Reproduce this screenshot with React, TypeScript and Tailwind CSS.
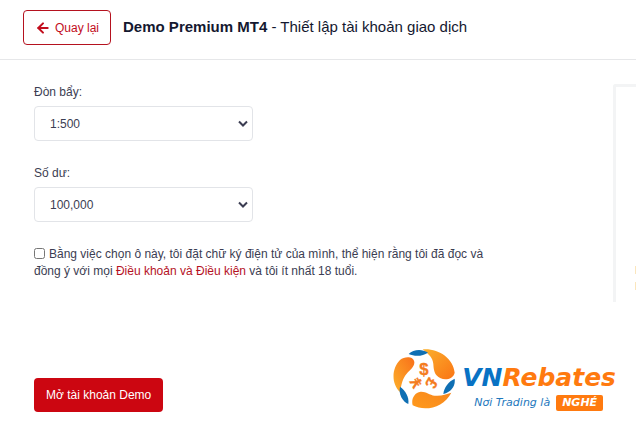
import { FiArrowLeft } from 'react-icons/fi'

const LEVERAGES = ['1:500', '1:200', '1:100']
const BALANCES = ['100,000', '50,000', '10,000']

type FieldProps = {
  id: string
  label: string
  options: string[]
}

function SelectField({ id, label, options }: FieldProps) {
  return (
    <div>
      <label htmlFor={id} className="block leading-4">
        {label}
      </label>
      <div className="relative mt-1.5 w-[219px]">
        <select
          id={id}
          className="h-[35px] w-full appearance-none rounded-[4px] border border-[#e2e4e8] bg-white px-[15px] text-[12px] text-[#3b3d52]"
        >
          {options.map((option) => (
            <option key={option}>{option}</option>
          ))}
        </select>
        <svg
          className="pointer-events-none absolute top-3.5 right-1 h-2 w-3"
          viewBox="0 0 12 8"
          fill="none"
          stroke="#3b3d52"
          strokeWidth="2"
        >
          <path d="M2 1.5 6 5.5 10 1.5" />
        </svg>
      </div>
    </div>
  )
}

function LogoMark() {
  return (
    <svg className="h-[62px] w-[62px] shrink-0" viewBox="25 25 186 184">
      <defs>
        <linearGradient id="flameTop" x1="0" y1="0" x2="1" y2="1">
          <stop offset="0" stopColor="#fbb02d" />
          <stop offset="1" stopColor="#fa7414" />
        </linearGradient>
        <linearGradient id="flameLeft" x1="0" y1="1" x2="1" y2="0">
          <stop offset="0" stopColor="#fdb02a" />
          <stop offset="1" stopColor="#f8701a" />
        </linearGradient>
        <linearGradient id="flameBottom" x1="1" y1="0" x2="0" y2="1">
          <stop offset="0" stopColor="#f7861e" />
          <stop offset="1" stopColor="#ff9a1c" />
        </linearGradient>
      </defs>
      <path
        fill="url(#flameTop)"
        d="M114 28C160 24 206 54 210 98C206 116 184 122 168 115C148 106 147 88 146 72C144 54 134 44 114 28Z"
      />
      <path
        fill="url(#flameLeft)"
        d="M46 156C20 132 20 86 46 60C60 49 86 48 89 66C90 82 74 90 66 101C54 114 50 134 46 156Z"
      />
      <path
        fill="url(#flameBottom)"
        d="M200 158C178 202 122 216 84 196C79 178 88 158 108 155C124 154 134 165 150 167C170 169 184 163 200 158Z"
      />
      <path fill="#0f6fb3" d="M72 42C86 28 112 26 130 38C114 49 90 50 72 42Z" />
      <path fill="#0f6fb3" d="M210 116C213 138 200 156 176 162C178 142 192 124 210 116Z" />
      <path fill="#0f6fb3" d="M46 140C62 152 74 170 71 192C54 184 41 164 46 140Z" />
      <g
        fill="#f47b20"
        stroke="#f47b20"
        strokeWidth="1"
        fontFamily="Liberation Sans"
        fontWeight="700"
        textAnchor="middle"
      >
        <text x="118" y="104" fontSize="50">
          $
        </text>
        <text x="95" y="144" fontSize="48" transform="rotate(-120 95 128)">
          ¥
        </text>
        <text x="140" y="146" fontSize="48" transform="rotate(120 140 130)">
          £
        </text>
      </g>
    </svg>
  )
}

function Logo() {
  return (
    <div className="flex items-start gap-[7px]">
      <LogoMark />
      <div className="pt-3.5 font-['DejaVu_Sans',sans-serif] italic">
        <div className="text-[25px] leading-8 font-bold text-[#ff7a0f]">
          <span className="text-[#0872c4]">VN</span>Rebates
        </div>
        <div className="flex items-center gap-1.5 pt-px pl-3 text-[11px] leading-4 text-[#1d78bd]">
          <span>Nơi Trading là</span>
          <span className="rounded-[2px] bg-[#ff7a0f] px-1.5 font-bold text-white">NGHÉ</span>
        </div>
      </div>
    </div>
  )
}

export default function App() {
  return (
    <div className="overflow-hidden bg-white font-['Liberation_Sans',Arial,sans-serif] text-[12px] text-[#3b3d52]">
      <header className="flex items-center gap-3 border-b border-[#e6e7e9] px-[23px] pt-2.5 pb-3.5">
        <button
          type="button"
          className="flex h-[35px] items-center gap-1 rounded-[4px] border border-[#b5121f] px-[11px] text-[#c20d1c]"
        >
          <FiArrowLeft size={16} strokeWidth={3} />
          Quay lại
        </button>
        <h1 className="text-[15px] text-[#14182f]">
          <b>Demo Premium MT4</b> - Thiết lập tài khoản giao dịch
        </h1>
      </header>

      <main className="flex items-start justify-between pt-6 pl-[34px]">
        <form id="demo-account" className="w-[460px]">
          <div className="flex flex-col gap-6">
            <SelectField id="leverage" label="Đòn bẩy:" options={LEVERAGES} />
            <SelectField id="balance" label="Số dư:" options={BALANCES} />
          </div>
          <div className="mt-6 leading-[17px]">
            <input id="terms" type="checkbox" className="mr-1 h-[11px] w-[11px] align-[-1px]" />
            <label htmlFor="terms">
              Bằng việc chọn ô này, tôi đặt chữ ký điện tử của mình, thể hiện rằng tôi đã đọc và đồng ý với mọi{' '}
              <a href="#terms" className="text-[#b5121f]">
                Điều khoản và Điều kiện
              </a>{' '}
              và tôi ít nhất 18 tuổi.
            </label>
          </div>
        </form>
        <aside className="flex h-[218px] w-[23px] flex-col items-end justify-end gap-2 rounded-tl-[3px] border-t-3 border-l-3 border-[#f3f4f5] pb-3">
          <div className="h-2 w-px bg-[#fbe6bd]" />
          <div className="h-2 w-px bg-[#fbe6bd]" />
        </aside>
      </main>

      <footer className="flex items-start justify-between pt-[46px] pr-5 pl-[34px]">
        <button
          type="submit"
          form="demo-account"
          className="mt-[30px] h-[34px] rounded-[4px] bg-[#cc0611] px-3 text-white"
        >
          Mở tài khoản Demo
        </button>
        <Logo />
      </footer>
    </div>
  )
}
